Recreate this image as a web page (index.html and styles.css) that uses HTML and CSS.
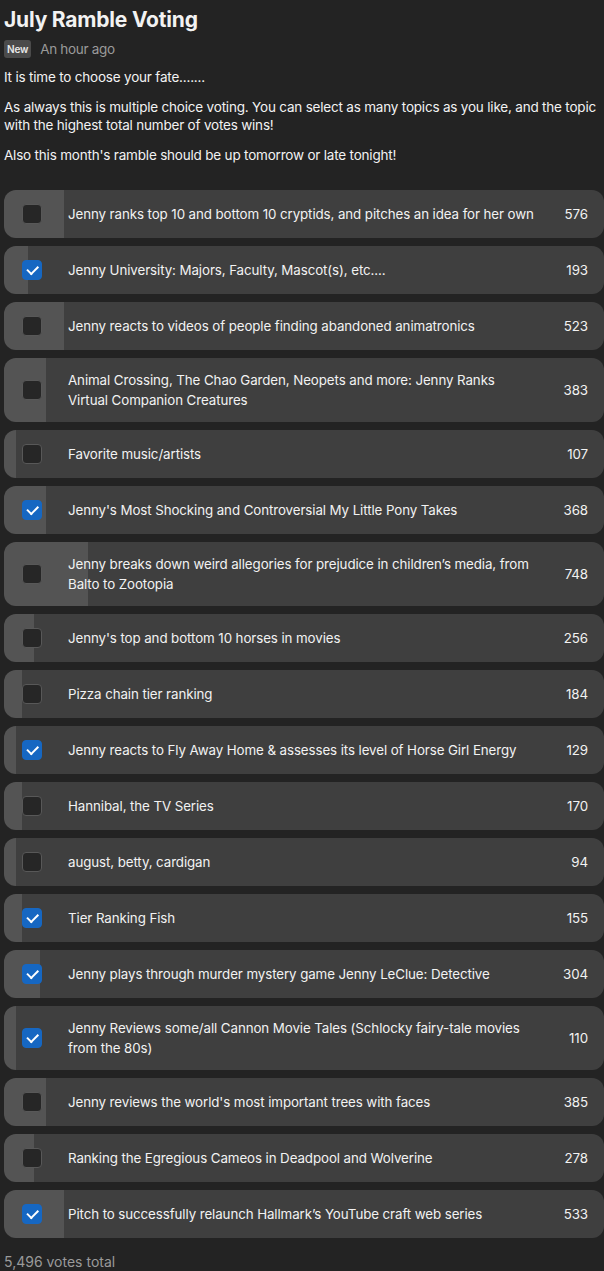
FILE: index.html
```html
<!DOCTYPE html>
<html>
<head>
    <meta charset="UTF-8">
    <title>July Ramble Voting</title>
    <link rel="stylesheet" href="styles.css">
</head>
<body>
<div class="post">
    <h1 class="title">July Ramble Voting</h1>
    <div class="meta">
        <span class="badge">New</span>
        <span class="time">An hour ago</span>
    </div>
    <div class="body">
        <p>It is time to choose your fate.......</p>
        <p>As always this is multiple choice voting. You can select as many topics as you like, and the topic with the highest total number of votes wins!</p>
        <p>Also this month's ramble should be up tomorrow or late tonight!</p>
    </div>

    <ul class="poll">
        <li class="option" style="--pct:10%"><span class="box"></span><span class="label">Jenny ranks top 10 and bottom 10 cryptids, and pitches an idea for her own</span><span class="count">576</span></li>
        <li class="option on" style="--pct:4%"><span class="box"></span><span class="label">Jenny University: Majors, Faculty, Mascot(s), etc....</span><span class="count">193</span></li>
        <li class="option" style="--pct:10%"><span class="box"></span><span class="label">Jenny reacts to videos of people finding abandoned animatronics</span><span class="count">523</span></li>
        <li class="option" style="--pct:7%"><span class="box"></span><span class="label">Animal Crossing, The Chao Garden, Neopets and more: Jenny Ranks Virtual Companion Creatures</span><span class="count">383</span></li>
        <li class="option" style="--pct:2%"><span class="box"></span><span class="label">Favorite music/artists</span><span class="count">107</span></li>
        <li class="option on" style="--pct:7%"><span class="box"></span><span class="label">Jenny's Most Shocking and Controversial My Little Pony Takes</span><span class="count">368</span></li>
        <li class="option" style="--pct:14%"><span class="box"></span><span class="label">Jenny breaks down weird allegories for prejudice in children’s media, from Balto to Zootopia</span><span class="count">748</span></li>
        <li class="option" style="--pct:5%"><span class="box"></span><span class="label">Jenny's top and bottom 10 horses in movies</span><span class="count">256</span></li>
        <li class="option" style="--pct:3%"><span class="box"></span><span class="label">Pizza chain tier ranking</span><span class="count">184</span></li>
        <li class="option on" style="--pct:2%"><span class="box"></span><span class="label">Jenny reacts to Fly Away Home &amp; assesses its level of Horse Girl Energy</span><span class="count">129</span></li>
        <li class="option" style="--pct:3%"><span class="box"></span><span class="label">Hannibal, the TV Series</span><span class="count">170</span></li>
        <li class="option" style="--pct:2%"><span class="box"></span><span class="label">august, betty, cardigan</span><span class="count">94</span></li>
        <li class="option on" style="--pct:3%"><span class="box"></span><span class="label">Tier Ranking Fish</span><span class="count">155</span></li>
        <li class="option on" style="--pct:6%"><span class="box"></span><span class="label">Jenny plays through murder mystery game Jenny LeClue: Detective</span><span class="count">304</span></li>
        <li class="option on" style="--pct:2%"><span class="box"></span><span class="label">Jenny Reviews some/all Cannon Movie Tales (Schlocky fairy-tale movies from the 80s)</span><span class="count">110</span></li>
        <li class="option" style="--pct:7%"><span class="box"></span><span class="label">Jenny reviews the world's most important trees with faces</span><span class="count">385</span></li>
        <li class="option" style="--pct:5%"><span class="box"></span><span class="label">Ranking the Egregious Cameos in Deadpool and Wolverine</span><span class="count">278</span></li>
        <li class="option on" style="--pct:10%"><span class="box"></span><span class="label">Pitch to successfully relaunch Hallmark’s YouTube craft web series</span><span class="count">533</span></li>
    </ul>
    <div class="total">5,496 votes total</div>
</div>
</body>
</html>
```

FILE: styles.css
```css
body,ul,li,h1,p{
    margin: 0;
    padding: 0;
    list-style: none;
}
body{
    background-color: #232323;
    color: #f2f2f2;
    font-family: Inter, "Liberation Sans", sans-serif;
    font-size: 14px;
}
.post{
    padding: 6px 0 0 4px;
}
.title{
    font-size: 21px;
    font-weight: 700;
    line-height: 27px;
    letter-spacing: -0.2px;
}
.meta{
    display: flex;
    align-items: center;
    gap: 9px;
    margin-top: 7px;
}
.badge{
    background-color: #4b4b4b;
    border-radius: 3px;
    padding: 3px 3px;
    font-size: 10px;
    font-weight: 600;
    line-height: 12px;
    letter-spacing: -0.2px;
    color: #e8e8e8;
}
.time{
    color: #9a9a9a;
    font-size: 13.5px;
    letter-spacing: -0.3px;
}
.body{
    margin-top: 10px;
    line-height: 18px;
    font-size: 13.5px;
    letter-spacing: -0.2px;
}
.body p{
    margin-bottom: 12px;
}
.poll{
    margin-top: 26px;
    display: flex;
    flex-direction: column;
    gap: 8px;
}
.option{
    display: flex;
    align-items: center;
    box-sizing: border-box;
    min-height: 48px;
    padding: 12px 16px 12px 18px;
    border-radius: 12px;
    background: linear-gradient(to right, #545454 var(--pct), #3f3f3f var(--pct));
    line-height: 20px;
    font-size: 13.35px;
    letter-spacing: -0.1px;
}
.box{
    flex: none;
    width: 20px;height: 20px;
    box-sizing: border-box;
    border: 1px solid #585858;
    border-radius: 4px;
    background-color: #262626;
    margin-right: 26px;
    display: flex;
    align-items: center;
    justify-content: center;
}
.on .box{
    border-color: #1667c2;
    background-color: #1667c2;
}
.on .box::after{
    content: "";
    width: 9px;height: 4.5px;
    border-left: 2.5px solid #fff;
    border-bottom: 2.5px solid #fff;
    transform: translate(0, -1.5px) rotate(-45deg);
}
.label{
    flex: 1;
}
.count{
    flex: none;
    margin-left: 26px;
    text-align: right;
}
.total{
    margin-top: 15px;
    color: #9a9a9a;
    font-size: 14px;
}
```
